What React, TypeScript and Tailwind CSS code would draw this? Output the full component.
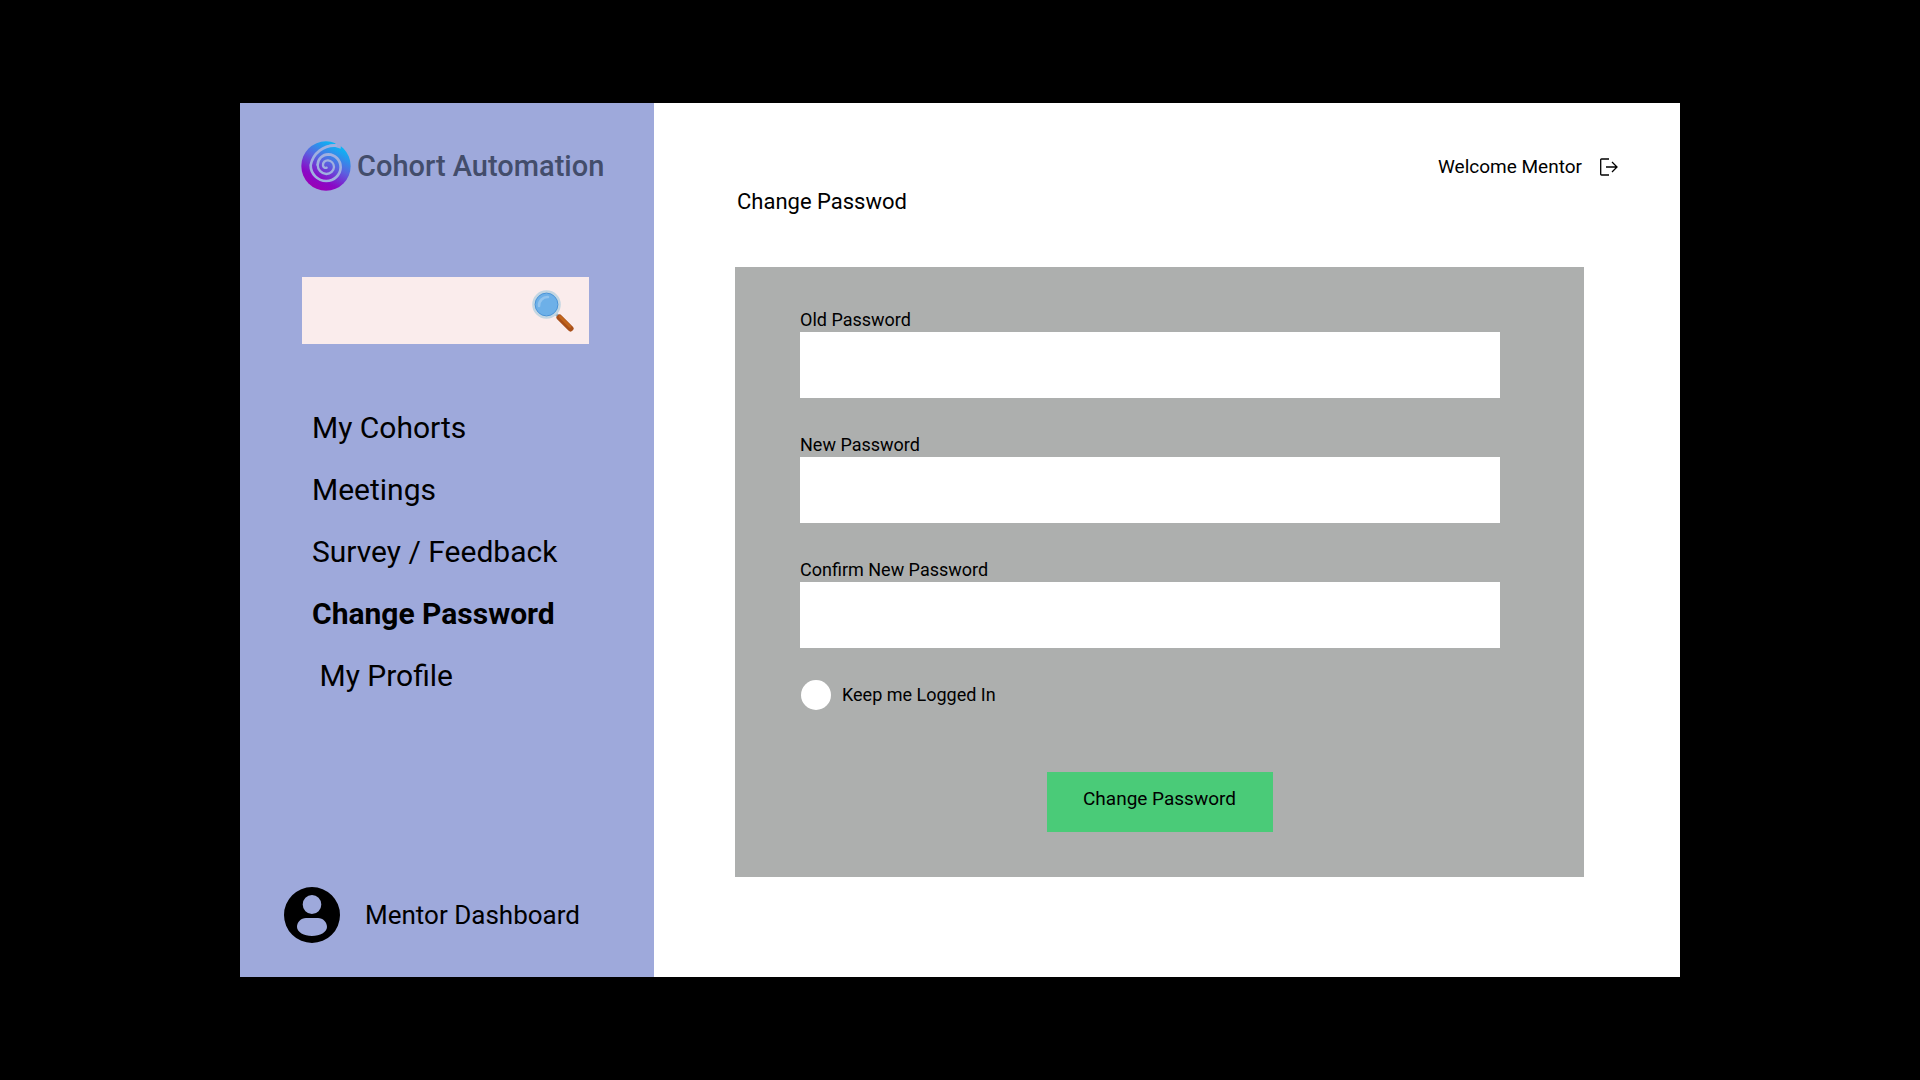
import React from "react";

const navItems = [
  { label: "My Cohorts" },
  { label: "Meetings" },
  { label: "Survey / Feedback" },
  { label: "Change Password", active: true },
  { label: "\u00a0My Profile" },
];

const fields = [
  { id: "old-password", label: "Old Password" },
  { id: "new-password", label: "New Password" },
  { id: "confirm-password", label: "Confirm New Password" },
];

function SwirlLogo() {
  return (
    <svg viewBox="33 33 150 150" className="size-[50px] shrink-0" aria-hidden="true">
      <defs>
        <linearGradient id="swirl" x1="0.3" y1="1" x2="0.78" y2="0.12">
          <stop offset="0" stopColor="#9c00b4" />
          <stop offset="0.25" stopColor="#8a08c6" />
          <stop offset="0.6" stopColor="#5a62e0" />
          <stop offset="1" stopColor="#0cb4f4" />
        </linearGradient>
      </defs>
      <circle cx="108" cy="108" r="74" fill="url(#swirl)" />
      <path d="M100 54Q120 44 152 56L154 30L128 32L138 42Q118 40 100 54Z" fill="#9ea9db" />
      <g fill="none" stroke="#a0b0e0" strokeLinecap="round">
        <path
          strokeWidth="8"
          d="M138 47A72 72 0 0 0 62 106A47 47 0 0 0 109 153A43 42 0 0 0 152 112A38 39 0 0 0 115 73A32 32 0 0 0 83 104"
        />
        <path
          strokeWidth="7"
          d="M83 104A27 28 0 0 0 109 132A24 22 0 0 0 132 111A20 21 0 0 0 114 91A14 14 0 0 0 99 106A8 8 0 0 0 110 113"
        />
      </g>
    </svg>
  );
}

function MagnifierIcon() {
  return (
    <svg viewBox="0 0 42 42" className="size-[42px]" aria-hidden="true">
      <path d="M23 23L29 29" stroke="#8fb3cc" strokeWidth="3" />
      <path d="M27.500 27.500L38.500 38.500" stroke="#a9501a" strokeWidth="6" strokeLinecap="round" />
      <path d="M28 26.500L38 36.500" stroke="#c1651c" strokeWidth="2.500" strokeLinecap="round" />
      <circle cx="14.500" cy="14.500" r="12.800" fill="#6db0e8" stroke="#c3d6e2" strokeWidth="3" />
      <circle cx="14.500" cy="14.500" r="11.400" fill="none" stroke="#4a94d8" strokeWidth="1" />
      <path d="M7 16A8.500 8.500 0 0 1 16 7" fill="none" stroke="#92c4ee" strokeWidth="2.600" strokeLinecap="round" />
    </svg>
  );
}

function UserIcon() {
  return (
    <svg viewBox="0 0 56 56" className="size-14 shrink-0" aria-hidden="true">
      <path
        fillRule="evenodd"
        d="M28 0A28 28 0 1 0 28 56A28 28 0 1 0 28 0ZM28 8A9.300 9.500 0 1 1 28 27A9.300 9.500 0 1 1 28 8ZM22 31H34C39 31 43 35 43 40C43 45 36 49 28 49C20 49 13 45 13 40C13 35 17 31 22 31Z"
      />
    </svg>
  );
}

function LogoutIcon() {
  return (
    <svg viewBox="0 0 18 18" className="size-[18px]" fill="none" stroke="black" strokeWidth="1.300" aria-hidden="true">
      <path d="M9 1H1.500Q0.700 1 0.700 1.800V16.200Q0.700 17 1.500 17H9" />
      <path d="M6 9H17M12 4L17 9L12 14" />
    </svg>
  );
}

export default function App() {
  return (
    <div className="flex min-h-screen items-center justify-center bg-black font-['Roboto',sans-serif] text-black">
      <div className="flex w-3/4 bg-white">
        <aside className="flex w-[414px] shrink-0 flex-col bg-[#9ea9db] pt-[38px] pb-[34px]">
          <div className="flex items-center gap-1.5 pl-[61px]">
            <SwirlLogo />
            <span className="text-[29px] leading-[40px] font-medium whitespace-nowrap text-[#434d6b]">
              Cohort Automation
            </span>
          </div>

          <form role="search" className="mt-[86px] mr-[65px] ml-[62px] flex h-[67px] items-center bg-[#faecec] pr-[15px]">
            <input type="search" aria-label="Search" className="h-full min-w-0 flex-1 bg-transparent px-4 text-lg outline-none" />
            <button type="button" aria-label="Search">
              <MagnifierIcon />
            </button>
          </form>

          <nav className="mt-16 flex flex-col items-start gap-[22px] pl-[72px] text-[30px] leading-[40px]">
            {navItems.map((item) => (
              <a
                key={item.label}
                href="#"
                aria-current={item.active ? "page" : undefined}
                className={item.active ? "font-bold" : "font-normal"}
              >
                {item.label}
              </a>
            ))}
          </nav>

          <div className="mt-auto flex items-center gap-[25px] pl-11">
            <UserIcon />
            <span className="text-[26px] leading-[40px]">Mentor Dashboard</span>
          </div>
        </aside>

        <main className="flex-1 pt-[50px] pb-[100px]">
          <div className="flex items-center justify-end gap-[18px] pr-[62px]">
            <span className="text-[19px] leading-[28px]">Welcome Mentor</span>
            <button type="button" aria-label="Log out">
              <LogoutIcon />
            </button>
          </div>

          <h1 className="mt-[5px] ml-[83px] text-[22px] leading-[32px]">Change Passwod</h1>

          <form className="mt-[49px] mr-24 ml-[81px] bg-[#adafae] pt-[41px] pb-[45px]">
            <div className="flex flex-col gap-[35px] pr-[84px] pl-[65px]">
              {fields.map((field) => (
                <div key={field.id} className="flex flex-col">
                  <label htmlFor={field.id} className="text-[18px] leading-[24px]">
                    {field.label}
                  </label>
                  <input id={field.id} type="password" className="h-[66px] bg-white px-4 text-lg outline-none" />
                </div>
              ))}
            </div>

            <div className="mt-8 flex items-center gap-[11px] pl-[66px]">
              <input
                id="keep-logged-in"
                type="radio"
                className="size-[30px] appearance-none rounded-full bg-white checked:bg-gray-700"
              />
              <label htmlFor="keep-logged-in" className="text-[18px] leading-[24px]">
                Keep me Logged In
              </label>
            </div>

            <button type="submit" className="mx-auto mt-[62px] block h-[60px] w-[226px] bg-[#4acb78] pb-1.5 text-[19px]">
              Change Password
            </button>
          </form>
        </main>
      </div>
    </div>
  );
}
